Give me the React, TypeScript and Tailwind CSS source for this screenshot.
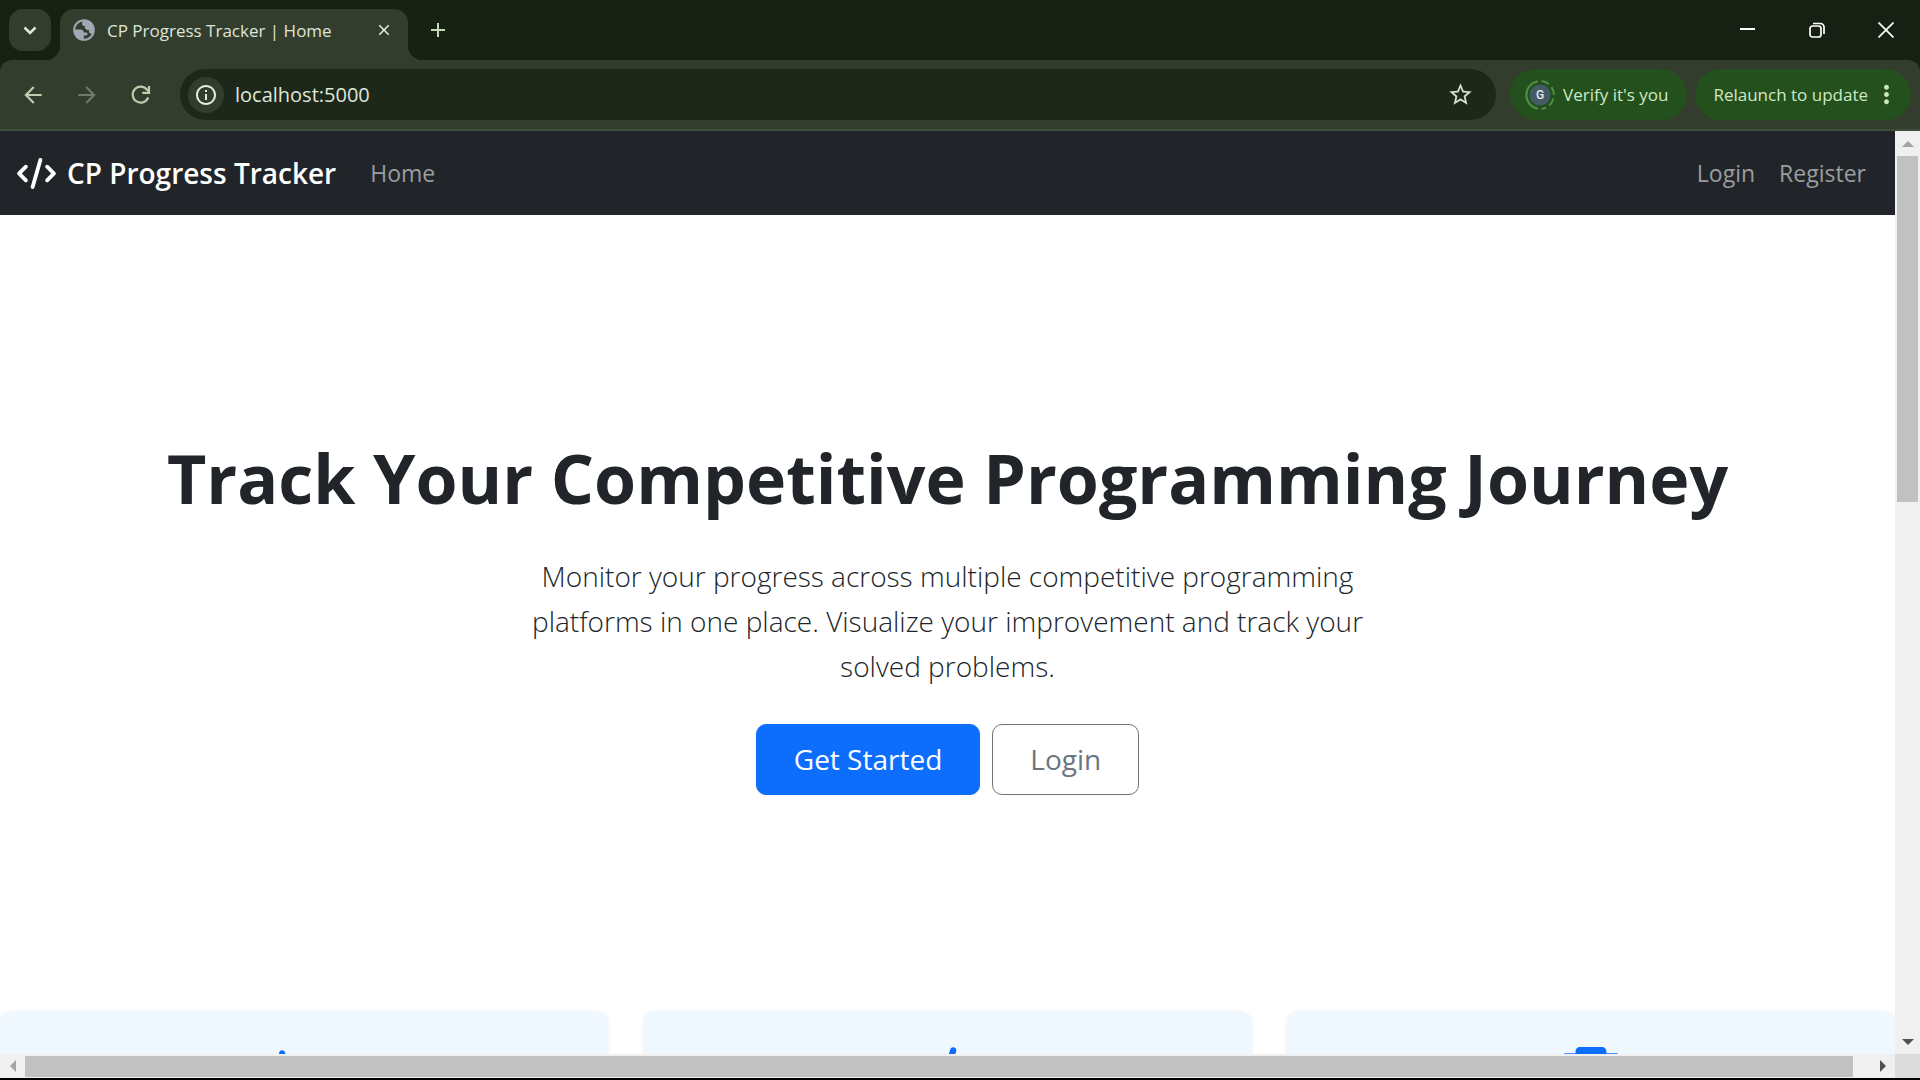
import React from 'react';
import { FaChartLine, FaCode, FaTrophy } from 'react-icons/fa6';
import { MdAdd, MdArrowBack, MdArrowForward, MdClose, MdInfoOutline, MdMoreVert, MdStarOutline } from 'react-icons/md';

function GlobeIcon() {
  return (
    <svg viewBox="0 0 22 22" className="size-[22px] shrink-0" aria-hidden="true">
      <circle cx="11" cy="11" r="9.8" fill="none" stroke="#a3a8b4" strokeWidth="2" />
      <path
        fill="#a3a8b4"
        d="M11 1c5.500 0 10 4.500 10 10 0 1.200-.2 2.300-.6 3.300-1.200.8-2.800.7-3.800-.3-.9-.8-1-2-.4-3-1.400.1-2.700-.2-3.600-1-1-.9-1-2-.3-2.900-1.300.1-2.300-.3-2.900-1.200C8.700 4.600 9.300 2.200 11 1z"
      />
      <path
        fill="#a3a8b4"
        d="M1.200 10.500h6.300c1.900 0 3.200 1.200 3.300 3h2.400c.8 0 1.300.6 1.300 1.400 0 1.200-1 1.700-2.200 1.700h-1.500v3.900C5.700 20.500 1 16.500 1.200 10.500z"
      />
    </svg>
  );
}

function ReloadIcon() {
  return (
    <svg viewBox="0 0 20 20" className="size-5" fill="none" stroke="#b9cfae" strokeWidth="2.200" aria-hidden="true">
      <path d="M17.200 12.500A8 8 0 1 1 16 4.600L18 7" />
      <path d="M18 1v6.800h-6.800" />
    </svg>
  );
}

function AvatarIcon() {
  return (
    <span className="relative flex size-[30px] shrink-0 items-center justify-center">
      <svg viewBox="0 0 30 30" className="absolute inset-0" fill="none" aria-hidden="true">
        <path d="M13 1.200A14 14 0 0 0 13 28.800" stroke="#4f8f45" strokeWidth="2" />
        <path
          d="M16.500 1.100A14 14 0 0 1 28.900 16.500A14 14 0 0 1 16.500 28.900"
          stroke="#4f8f45"
          strokeWidth="2"
          strokeDasharray="8 4"
        />
        <circle cx="15" cy="15" r="10.500" fill="#455a68" />
      </svg>
      <span className="relative font-['Roboto'] text-xs font-medium text-[#e6ecf0]">G</span>
    </span>
  );
}

function TabStrip() {
  return (
    <div className="flex h-[60px] items-end bg-[#172113] pl-[9px]">
      <button
        aria-label="Search tabs"
        className="mb-[9px] flex size-[42px] items-center justify-center rounded-[14px] bg-[#333d2d]"
      >
        <svg viewBox="0 0 14 9" className="h-[9px] w-[14px]" fill="none" stroke="#dfe8d8" strokeWidth="2.500" aria-hidden="true">
          <path d="M1.500 1.500L7 7l5.500-5.500" />
        </svg>
      </button>
      <div className="relative ml-[9px] flex h-[51px] w-[348px] items-center rounded-t-[14px] bg-[#333d2d] pr-[15px] pb-[9px] pl-[13px]">
        <span className="absolute bottom-0 -left-[14px] size-[14px] bg-[radial-gradient(circle_at_0_0,#172113_14px,#333d2d_14px)]" />
        <span className="absolute -right-[14px] bottom-0 size-[14px] bg-[radial-gradient(circle_at_100%_0,#172113_14px,#333d2d_14px)]" />
        <GlobeIcon />
        <span className="ml-3 flex-1 pt-0.5 text-[17px] whitespace-nowrap text-[#dfe5d9]">CP Progress Tracker | Home</span>
        <button aria-label="Close tab">
          <MdClose size={18} color="#e6eee0" />
        </button>
      </div>
      <button aria-label="New tab" className="mb-[18px] ml-[18px]">
        <MdAdd size={24} color="#c3d8b8" />
      </button>
      <div className="ml-auto flex h-full items-center gap-[53px] pr-[26px]">
        <button aria-label="Minimize">
          <svg viewBox="0 0 16 16" className="size-4" aria-hidden="true">
            <path d="M0 7h15" stroke="#fff" strokeWidth="2" />
          </svg>
        </button>
        <button aria-label="Restore">
          <svg viewBox="0 0 16 16" className="size-4" fill="none" stroke="#fff" strokeWidth="1.700" aria-hidden="true">
            <rect x="1" y="4" width="11" height="11" rx="2.500" />
            <path d="M4 1.500h7.500a3.500 3.500 0 0 1 3.500 3.500V12" />
          </svg>
        </button>
        <button aria-label="Close window">
          <svg viewBox="0 0 16 16" className="size-4" stroke="#fff" strokeWidth="1.700" aria-hidden="true">
            <path d="M.5.500l15 15M15.500.500l-15 15" />
          </svg>
        </button>
      </div>
    </div>
  );
}

function Toolbar() {
  return (
    <div className="bg-[#172113]">
      <div className="flex h-[71px] items-center rounded-t-[12px] border-b-2 border-[#3f4c38] bg-[#333d2d] pr-[9px] pl-[20px]">
        <button aria-label="Back">
          <MdArrowBack size={26} color="#b9cfae" />
        </button>
        <button aria-label="Forward" className="ml-[28px]">
          <MdArrowForward size={26} color="#6f7b69" />
        </button>
        <button aria-label="Reload" className="ml-[31px]">
          <ReloadIcon />
        </button>
        <div className="ml-[29px] flex h-[51px] flex-1 items-center rounded-full bg-[#1e281a] pr-[22px] pl-2">
          <button
            aria-label="View site information"
            className="flex size-9 shrink-0 items-center justify-center rounded-full bg-[#333d2d]"
          >
            <MdInfoOutline size={24} color="#e3ebdd" />
          </button>
          <input
            aria-label="Address"
            defaultValue="localhost:5000"
            className="ml-[11px] min-w-0 flex-1 bg-transparent text-[20px] text-[#dfe6da] outline-none"
          />
          <button aria-label="Bookmark this tab">
            <MdStarOutline size={27} color="#d5dfcf" />
          </button>
        </div>
        <button className="ml-[14px] flex h-[51px] items-center gap-2 rounded-full bg-[#23501c] pr-[19px] pl-[15px] text-[17px] whitespace-nowrap text-[#cfe8c4]">
          <AvatarIcon />
          Verify it's you
        </button>
        <button className="ml-2 flex h-[51px] items-center gap-1 rounded-full bg-[#23501c] pr-[10px] pl-[18px] text-[17px] whitespace-nowrap text-[#cfe8c4]">
          Relaunch to update
          <MdMoreVert size={29} />
        </button>
      </div>
    </div>
  );
}

function Navbar() {
  return (
    <nav className="flex h-[84px] shrink-0 items-center bg-[#212529] pr-[29px] pl-[17px] text-[23px] text-[#9b9d9f]">
      <a href="#" className="flex items-center gap-[11px] text-[28px] font-semibold text-white">
        <FaCode className="h-[31px] w-[39px]" />
        CP Progress Tracker
      </a>
      <a href="#" className="ml-[34px]">
        Home
      </a>
      <div className="ml-auto flex gap-6">
        <a href="#">Login</a>
        <a href="#">Register</a>
      </div>
    </nav>
  );
}

function Hero() {
  return (
    <section className="flex shrink-0 flex-col items-center pt-[220px] pb-[216px] text-center text-[#212529]">
      <h1 className="text-[68px] leading-[86px] font-bold whitespace-nowrap">Track Your Competitive Programming Journey</h1>
      <p className="mt-[33px] max-w-[860px] text-[28px] leading-[45px] font-light">
        Monitor your progress across multiple competitive programming platforms in one place. Visualize your improvement
        and track your solved problems.
      </p>
      <div className="mt-[35px] flex gap-3 text-[28px] leading-[41px]">
        <a href="#" className="rounded-[10px] border border-[#0d6efd] bg-[#0d6efd] px-[37px] py-[14px] text-white">
          Get Started
        </a>
        <a href="#" className="rounded-[10px] border border-[#6c757d] px-[37px] py-[14px] text-[#6c757d]">
          Login
        </a>
      </div>
    </section>
  );
}

function FeatureCard({ children }: { children: React.ReactNode }) {
  return (
    <div className="flex h-[300px] justify-center rounded-[10px] bg-[#eff7ff] pt-9 text-[50px] text-[#0d6efd] shadow-[0_2px_5px_rgba(0,0,0,0.075)]">
      {children}
    </div>
  );
}

function Arrow({ className }: { className: string }) {
  return (
    <svg viewBox="0 0 12 6" className={className} fill="currentColor" aria-hidden="true">
      <path d="M0 6L6 0l6 6z" />
    </svg>
  );
}

export default function App() {
  return (
    <div className="flex h-screen flex-col overflow-hidden bg-black pb-0.5 font-['Open_Sans',sans-serif]">
      <TabStrip />
      <Toolbar />
      <div className="grid min-h-0 flex-1 grid-cols-[1fr_25px] grid-rows-[1fr_24px] bg-[#f0f0f0]">
        <main className="flex min-h-0 min-w-0 flex-col overflow-hidden bg-white">
          <Navbar />
          <Hero />
          <div className="grid grid-cols-3 gap-9">
            <FeatureCard>
              <FaChartLine className="size-[50px]" />
            </FeatureCard>
            <FeatureCard>
              <FaCode className="h-[50px] w-[62px]" />
            </FeatureCard>
            <FeatureCard>
              <FaTrophy className="h-[50px] w-[56px]" />
            </FeatureCard>
          </div>
        </main>
        <div className="flex min-h-0 flex-col items-center">
          <div className="flex h-[25px] shrink-0 items-center text-[#a3a3a3]">
            <Arrow className="h-[6px] w-[12px]" />
          </div>
          <div className="h-[346px] w-[21px] bg-[#c1c1c1]" />
          <div className="mt-auto flex h-[25px] shrink-0 items-center text-[#505050]">
            <Arrow className="h-[6px] w-[12px] rotate-180" />
          </div>
        </div>
        <div className="flex min-w-0 items-center">
          <div className="flex w-[25px] justify-center text-[#a3a3a3]">
            <Arrow className="h-[6px] w-[12px] -rotate-90" />
          </div>
          <div className="mr-[17px] h-[21px] flex-1 bg-[#c1c1c1]" />
          <div className="flex w-[25px] justify-center text-[#505050]">
            <Arrow className="h-[6px] w-[12px] rotate-90" />
          </div>
        </div>
        <div className="bg-[#dcdcdc]" />
      </div>
    </div>
  );
}
